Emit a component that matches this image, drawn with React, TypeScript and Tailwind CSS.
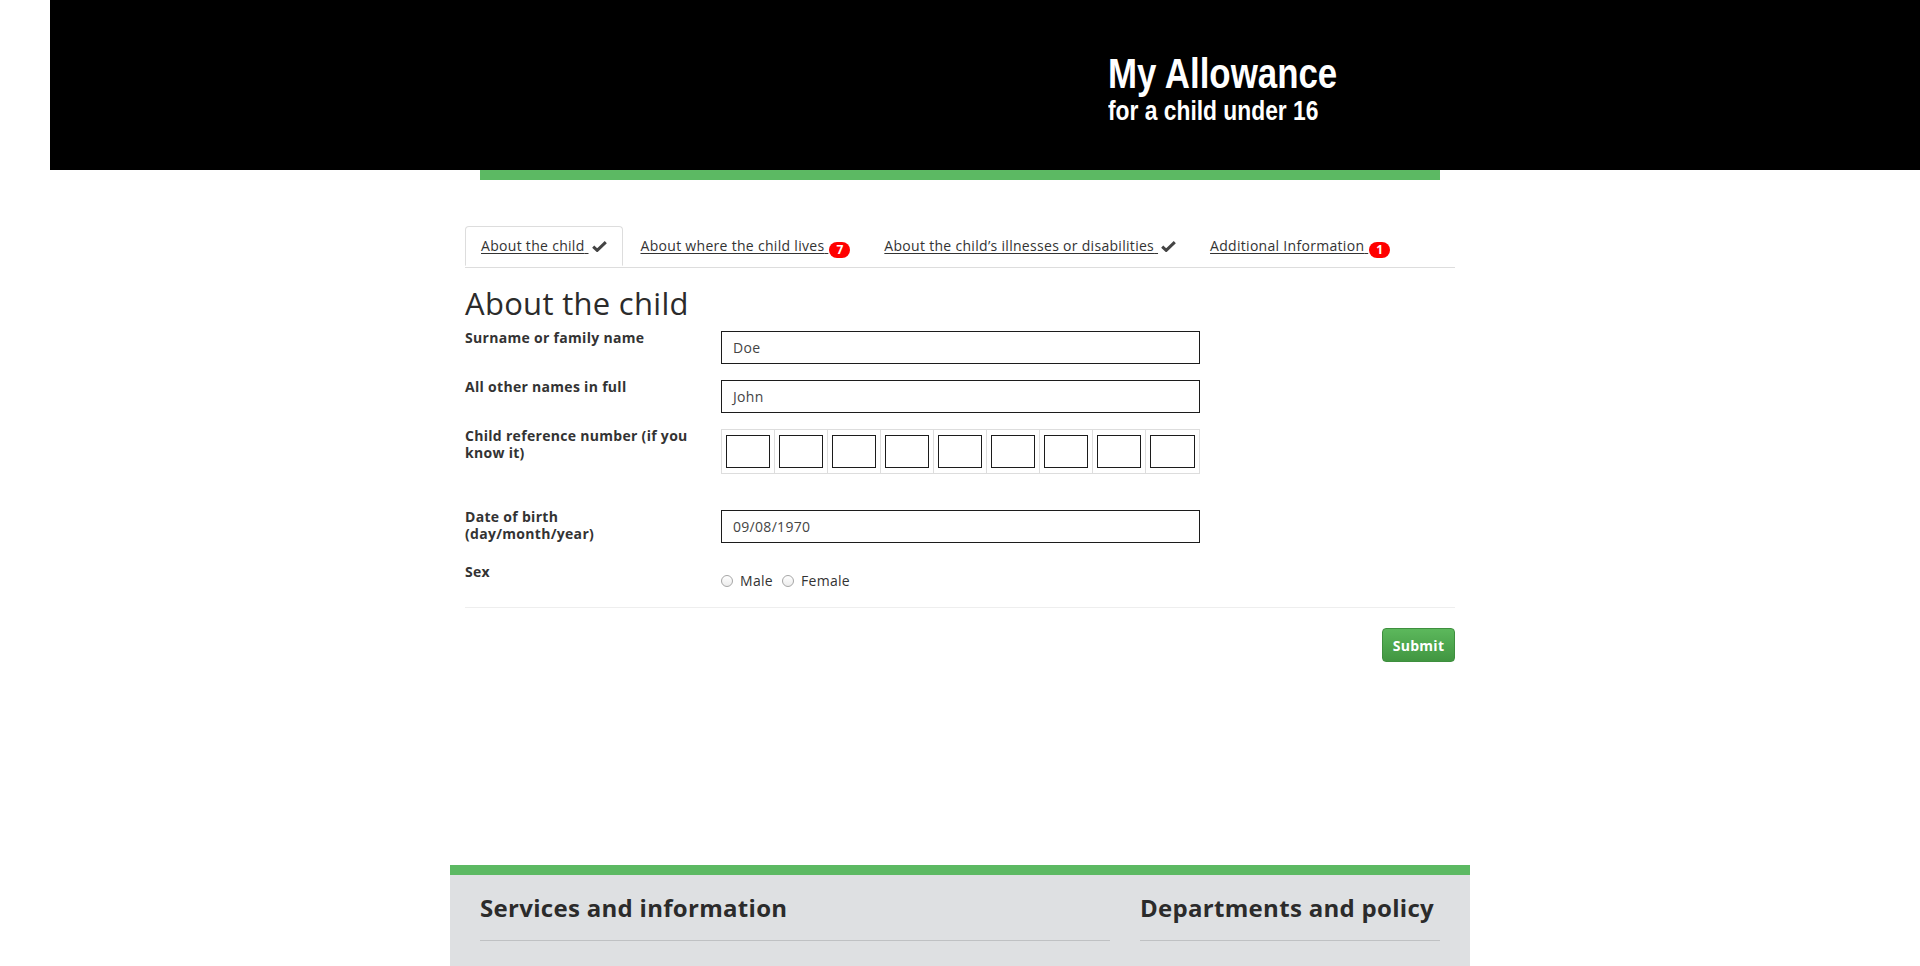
import React from 'react';

type Tab = {
  label: string;
  active?: boolean;
  done?: boolean;
  count?: number;
};

const tabs: Tab[] = [
  { label: 'About the child', active: true, done: true },
  { label: 'About where the child lives', count: 7 },
  { label: 'About the child\u2019s illnesses or disabilities', done: true },
  { label: 'Additional Information', count: 1 },
];

function Check() {
  return (
    <svg width="15" height="11" viewBox="0 0 15 11" className="ml-[3px] inline-block align-[-1px]">
      <path d="M1.2 5.6 L5.2 9.4 L13.8 1.2" fill="none" stroke="#444" strokeWidth="3" />
    </svg>
  );
}

function Badge({ n }: { n: number }) {
  return (
    <span className="ml-[1px] inline-flex h-[16px] min-w-[21px] items-center justify-center rounded-full bg-[#ff0000] px-[6px] align-[-3px] text-[12px] font-bold leading-none tracking-normal text-white">
      {n}
    </span>
  );
}

function Field({ value }: { value: string }) {
  return (
    <div className="flex h-[33px] w-[479px] items-center border border-[#1c1c1c] px-[11px] text-[14px] text-[#444]">
      {value}
    </div>
  );
}

function Radio({ label }: { label: string }) {
  return (
    <label className="flex items-center">
      <span className="h-[12px] w-[12px] rounded-full border border-[#a6a6a6] bg-gradient-to-b from-white to-[#ececec]" />
      <span className="ml-[7px] text-[14px] leading-[16px] text-[#333]">{label}</span>
    </label>
  );
}

export default function App() {
  return (
    <div className="h-[966px] overflow-hidden bg-white font-['Open_Sans',sans-serif] text-[#333]">
      {/* Header */}
      <header className="ml-[50px] h-[170px] bg-black pl-[1058px] pt-[53px] font-['Liberation_Sans',Arial,sans-serif] font-bold text-white">
        <div className="origin-left scale-x-[0.83] text-[42px] leading-[42px] whitespace-nowrap">My Allowance</div>
        <div className="mt-[3px] origin-left scale-x-[0.845] text-[27px] leading-[27px] whitespace-nowrap">for a child under 16</div>
      </header>
      <div className="mx-auto h-[10px] w-[960px] bg-[#5cb963]" />

      <main className="mx-auto w-[990px] pt-[46px] tracking-[0.3px]">
        {/* Tabs */}
        <ul className="flex border-b border-[#dddddd]">
          {tabs.map((t) => (
            <li key={t.label} className="-mb-px mr-[2px]">
              <a
                className={`block rounded-t-[4px] border px-[15px] pb-[9px] pt-[9px] text-[14px] leading-[20px] text-[#333] ${
                  t.active ? 'border-[#dddddd] border-b-white bg-white' : 'border-transparent'
                }`}
              >
                <span className="underline decoration-[#333] underline-offset-[2px]">{t.label} </span>
                {t.done && <Check />}
                {t.count !== undefined && <Badge n={t.count} />}
              </a>
            </li>
          ))}
        </ul>

        <h1 className="mt-[18px] text-[31px] font-normal leading-[34px] text-[#2b2b2b]">About the child</h1>

        {/* Form */}
        <div className="mt-[11px] flex flex-col text-[14px]">
          <div className="flex">
            <div className="-mt-[2px] w-[256px] text-[14px] font-bold leading-[17px]">Surname or family name</div>
            <Field value="Doe" />
          </div>

          <div className="mt-[16px] flex">
            <div className="-mt-[2px] w-[256px] text-[14px] font-bold leading-[17px]">All other names in full</div>
            <Field value="John" />
          </div>

          <div className="mt-[16px] flex">
            <div className="-mt-[2px] w-[256px] pr-[14px] text-[14px] font-bold leading-[17px]">
              Child reference number (if you know it)
            </div>
            <div className="grid w-[479px] grid-cols-9 border border-[#dddddd]">
              {Array.from({ length: 9 }).map((_, i) => (
                <div key={i} className={`px-[4px] py-[5px] ${i < 8 ? 'border-r border-[#dddddd]' : ''}`}>
                  <div className="h-[33px] border border-[#1c1c1c]" />
                </div>
              ))}
            </div>
          </div>

          <div className="mt-[36px] flex">
            <div className="-mt-[2px] w-[256px] text-[14px] font-bold leading-[17px]">
              Date of birth
              <br />
              (day/month/year)
            </div>
            <Field value="09/08/1970" />
          </div>

          <div className="mt-[22px] flex">
            <div className="-mt-[2px] w-[256px] text-[14px] font-bold leading-[17px]">Sex</div>
            <div className="flex items-center gap-[9px] pt-[8px]">
              <Radio label="Male" />
              <Radio label="Female" />
            </div>
          </div>
        </div>

        <div className="mt-[18px] border-t border-[#eeeeee]" />

        <div className="mt-[20px] flex justify-end">
          <button className="h-[34px] w-[73px] rounded-[4px] border border-[#3e8f3e] bg-gradient-to-b from-[#5cb85c] to-[#419641] text-[14px] font-bold text-white">
            Submit
          </button>
        </div>
      </main>

      {/* Footer */}
      <footer className="mx-auto mt-[203px] h-[120px] w-[1020px] border-t-[10px] border-[#5cb963] bg-[#dee0e2] px-[30px] pt-[20px] tracking-[0.3px]">
        <div className="flex gap-[30px]">
          <div className="w-[630px] border-b border-[#bfc1c3] pb-[19px]">
            <h2 className="text-[24px] font-bold leading-[26px] text-[#2b2b2b]">Services and information</h2>
          </div>
          <div className="w-[300px] border-b border-[#bfc1c3] pb-[19px]">
            <h2 className="text-[24px] font-bold leading-[26px] text-[#2b2b2b]">Departments and policy</h2>
          </div>
        </div>
      </footer>
    </div>
  );
}
